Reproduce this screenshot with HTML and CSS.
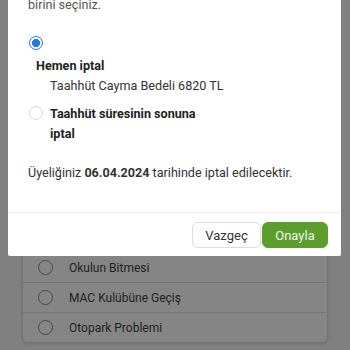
FILE: index.html
```html
<!DOCTYPE html>
<html lang="tr">
<head>
<meta charset="utf-8">
<link rel="stylesheet" href="styles.css">
</head>
<body>
<div class="page">
  <div class="card">
    <div class="row"><span class="circle"></span><span>Taşınma</span></div>
    <div class="row"><span class="circle"></span><span>Sağlık Sorunları</span></div>
    <div class="row"><span class="circle"></span><span>Maddi Nedenler</span></div>
    <div class="row"><span class="circle"></span><span>Zaman Yetersizliği</span></div>
    <div class="row"><span class="circle"></span><span>İş Değişikliği</span></div>
    <div class="row"><span class="circle"></span><span>Hizmet Memnuniyetsizliği</span></div>
    <div class="row"><span class="circle"></span><span>Okulun Bitmesi</span></div>
    <div class="row"><span class="circle"></span><span>MAC Kulübüne Geçiş</span></div>
    <div class="row"><span class="circle"></span><span>Otopark Problemi</span></div>
  </div>
</div>
<div class="overlay">
  <div class="modal">
    <div class="body">
      <p class="intro">Üyeliğinizi iptal etmek için aşağıdaki seçeneklerden<br>birini seçiniz.</p>
      <div class="opt1">
        <span class="radio on"></span>
        <div class="opt1-label">Hemen iptal</div>
        <div class="opt-sub">Taahhüt Cayma Bedeli 6820 TL</div>
      </div>
      <div class="opt2">
        <span class="radio"></span>
        <div class="opt2-label">Taahhüt süresinin sonuna<br>iptal</div>
      </div>
      <p class="note">Üyeliğiniz <b>06.04.2024</b> tarihinde iptal edilecektir.</p>
    </div>
    <div class="footer">
      <button class="btn cancel">Vazgeç</button>
      <button class="btn ok">Onayla</button>
    </div>
  </div>
</div>
</body>
</html>
```

FILE: styles.css
```css
* { box-sizing: border-box; }
html, body { margin: 0; padding: 0; }
body {
  font-family: Roboto, "Noto Sans", sans-serif;
  font-size: 12.6px;
  background: #f6f6f6;
  width: 350px;
  height: 350px;
  overflow: hidden;
}
.page {
  height: 350px;
  display: flex;
  flex-direction: column;
  justify-content: flex-end;
  padding: 0 22px 7px 22px;
}
.card {
  background: #ffffff;
  border: 1px solid #dcdcdc;
  border-radius: 6px;
  box-shadow: 0 1px 3px rgba(0,0,0,0.15);
}
.row {
  height: 30px;
  display: flex;
  align-items: center;
  padding-left: 15px;
  gap: 16px;
  color: #444;
  font-size: 12px;
  border-top: 1px solid #dedede;
}
.row:first-child { border-top: none; }
.circle {
  width: 15px;
  height: 15px;
  border: 1.5px solid #8a8a8a;
  border-radius: 50%;
}
.overlay {
  position: fixed;
  inset: 0;
  background: rgba(0,0,0,0.48);
}
.modal {
  position: absolute;
  left: 8px;
  right: 9px;
  bottom: 94px;
  background: #fff;
  border-radius: 2px;
}
.body {
  padding: 0 20px 0 20px;
  color: #333;
  line-height: 20px;
}
.intro {
  margin: 0;
  color: #555;
}
.opt1 { margin-top: 21px; }
.radio {
  display: block;
  width: 14px;
  height: 14px;
  margin-left: 1px;
  border-radius: 50%;
  border: 1px solid #d8d8d8;
  background: #fff;
}
.radio.on {
  border: 1.5px solid #1e7be6;
  background: radial-gradient(circle, #1e7be6 0 3.8px, #fff 4.3px);
}
.opt1-label {
  margin-top: 6px;
  margin-left: 8px;
  font-weight: 700;
  color: #222;
}
.opt-sub {
  padding-left: 22px;
  color: #333;
}
.opt2 {
  margin-top: 8px;
  display: flex;
  align-items: flex-start;
  gap: 7px;
}
.opt2 .radio { margin-top: 2px; }
.opt2-label {
  font-weight: 700;
  color: #222;
}
.note {
  margin: 19px 0 0 0;
  color: #333;
}
.note b { font-weight: 700; }
.footer {
  margin-top: 29px;
  border-top: 1px solid #eeeeee;
  padding: 9px 13px 8px 0;
  display: flex;
  justify-content: flex-end;
  gap: 1px;
}
.btn {
  font-family: Roboto, "Noto Sans", sans-serif;
  font-size: 13px;
  height: 26px;
  border-radius: 6px;
  padding: 0;
  cursor: pointer;
}
.cancel {
  width: 69px;
  background: #fff;
  color: #333;
  border: 1px solid #dddddd;
}
.ok {
  width: 66px;
  background: #5c9e2c;
  color: #eef7e6;
  border: 1px solid #5c9e2c;
}
```
